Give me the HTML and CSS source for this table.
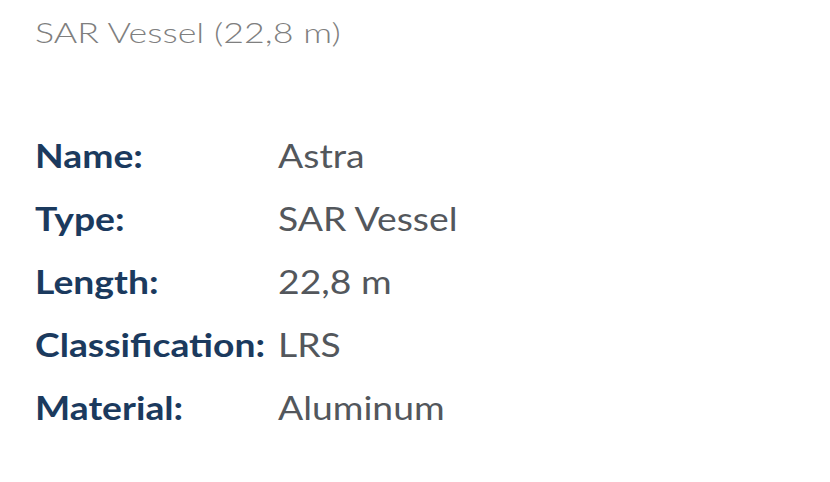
FILE: index.html
```html
<!DOCTYPE html>
<html lang="en">
<head>
<meta charset="utf-8">
<link rel="stylesheet" href="styles.css">
</head>
<body>
<div class="card">
  <h1 class="title">SAR Vessel (22,8 m)</h1>
  <dl class="specs">
    <dt>Name:</dt><dd>Astra</dd>
    <dt>Type:</dt><dd>SAR Vessel</dd>
    <dt>Length:</dt><dd>22,8 m</dd>
    <dt>Classification:</dt><dd>LRS</dd>
    <dt>Material:</dt><dd>Aluminum</dd>
  </dl>
</div>
</body>
</html>
```
FILE: styles.css
```css
html, body {
  margin: 0;
  padding: 0;
  background: #ffffff;
}
body {
  font-family: Lato, "Open Sans", sans-serif;
}
.card {
  display: flex;
  flex-direction: column;
  align-items: flex-start;
  padding: 16px 35px 0 35px;
}
.title {
  margin: 0;
  font-size: 28px;
  font-weight: 300;
  line-height: 33.6px;
  color: #7f7f7f;
  white-space: nowrap;
  transform: scaleX(1.28);
  transform-origin: 0 0;
}
.specs {
  margin: 74px 0 0 0;
  display: grid;
  grid-template-columns: 208.6px max-content;
  font-size: 32px;
  line-height: 63px;
  white-space: nowrap;
  transform: scaleX(1.165);
  transform-origin: 0 0;
}
.specs dt {
  font-weight: 700;
  color: #1b3a5e;
}
.specs dd {
  margin: 0;
  color: #53575c;
}
```
